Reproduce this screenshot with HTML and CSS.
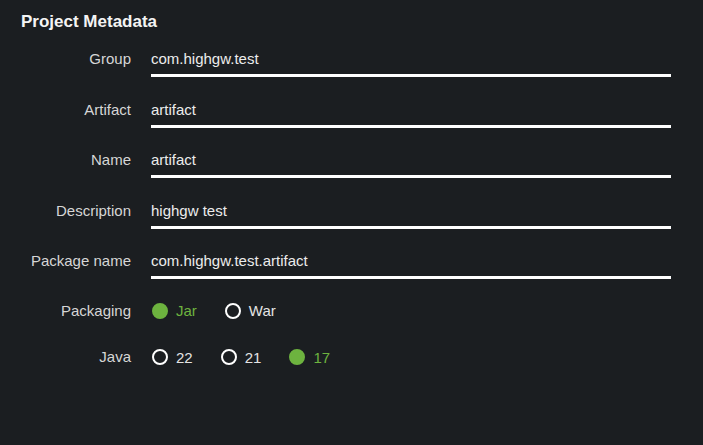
FILE: index.html
```html
<!DOCTYPE html>
<html lang="en">
  <head>
    <meta charset="UTF-8" />
    <meta name="viewport" content="width=device-width, initial-scale=1.0" />
    <title>Project Metadata</title>
    <link rel="stylesheet" href="styles.css">
  </head>
  <body>
    <div class="panel">
      <h2 class="title">Project Metadata</h2>
      <div class="form">
        <label class="label">Group</label>
        <div class="input">com.highgw.test</div>

        <label class="label">Artifact</label>
        <div class="input">artifact</div>

        <label class="label">Name</label>
        <div class="input">artifact</div>

        <label class="label">Description</label>
        <div class="input">highgw test</div>

        <label class="label">Package name</label>
        <div class="input">com.highgw.test.artifact</div>

        <label class="label label-radio">Packaging</label>
        <div class="radios">
          <span class="radio checked"><i class="dot"></i>Jar</span>
          <span class="radio"><i class="dot"></i>War</span>
        </div>

        <label class="label label-radio">Java</label>
        <div class="radios">
          <span class="radio"><i class="dot"></i>22</span>
          <span class="radio"><i class="dot"></i>21</span>
          <span class="radio checked"><i class="dot"></i>17</span>
        </div>
      </div>
    </div>
  </body>
</html>
```

FILE: styles.css
```css
html,
body {
  margin: 0;
  padding: 0;
  background: #1b1e21;
}

.panel {
  padding: 12px 0 0 21px;
  font-family: "Liberation Sans", Arial, sans-serif;
  color: #e4e4e4;
}

.title {
  margin: 0;
  font-size: 17px;
  line-height: 20px;
  font-weight: bold;
  color: #f4f4f4;
}

.form {
  display: grid;
  grid-template-columns: 110px 520px;
  column-gap: 20px;
  row-gap: 17.5px;
  margin-top: 12px;
  align-items: start;
}

.label {
  text-align: right;
  font-size: 15px;
  line-height: 30px;
  color: #d6d6d6;
}

.label-radio {
  line-height: 24px;
}

.input {
  height: 30px;
  line-height: 30px;
  font-size: 15px;
  border-bottom: 3px solid #ffffff;
  color: #ececec;
}

.radios {
  display: flex;
  gap: 28px;
  height: 24px;
  align-items: center;
  padding-left: 1px;
}

.form .label-radio:nth-last-child(4),
.form .radios:nth-last-child(3) {
  margin-top: 2px;
}

.form .label-radio:nth-last-child(2),
.form .radios:last-child {
  margin-top: 5px;
}

.radio {
  display: flex;
  align-items: center;
  gap: 8px;
  font-size: 15px;
  color: #e4e4e4;
}

.dot {
  display: block;
  box-sizing: border-box;
  width: 16px;
  height: 16px;
  border: 2px solid #ffffff;
  border-radius: 50%;
}

.radio.checked {
  color: #6db33f;
}

.radio.checked .dot {
  border-color: #6db33f;
  background: #6db33f;
}
```
